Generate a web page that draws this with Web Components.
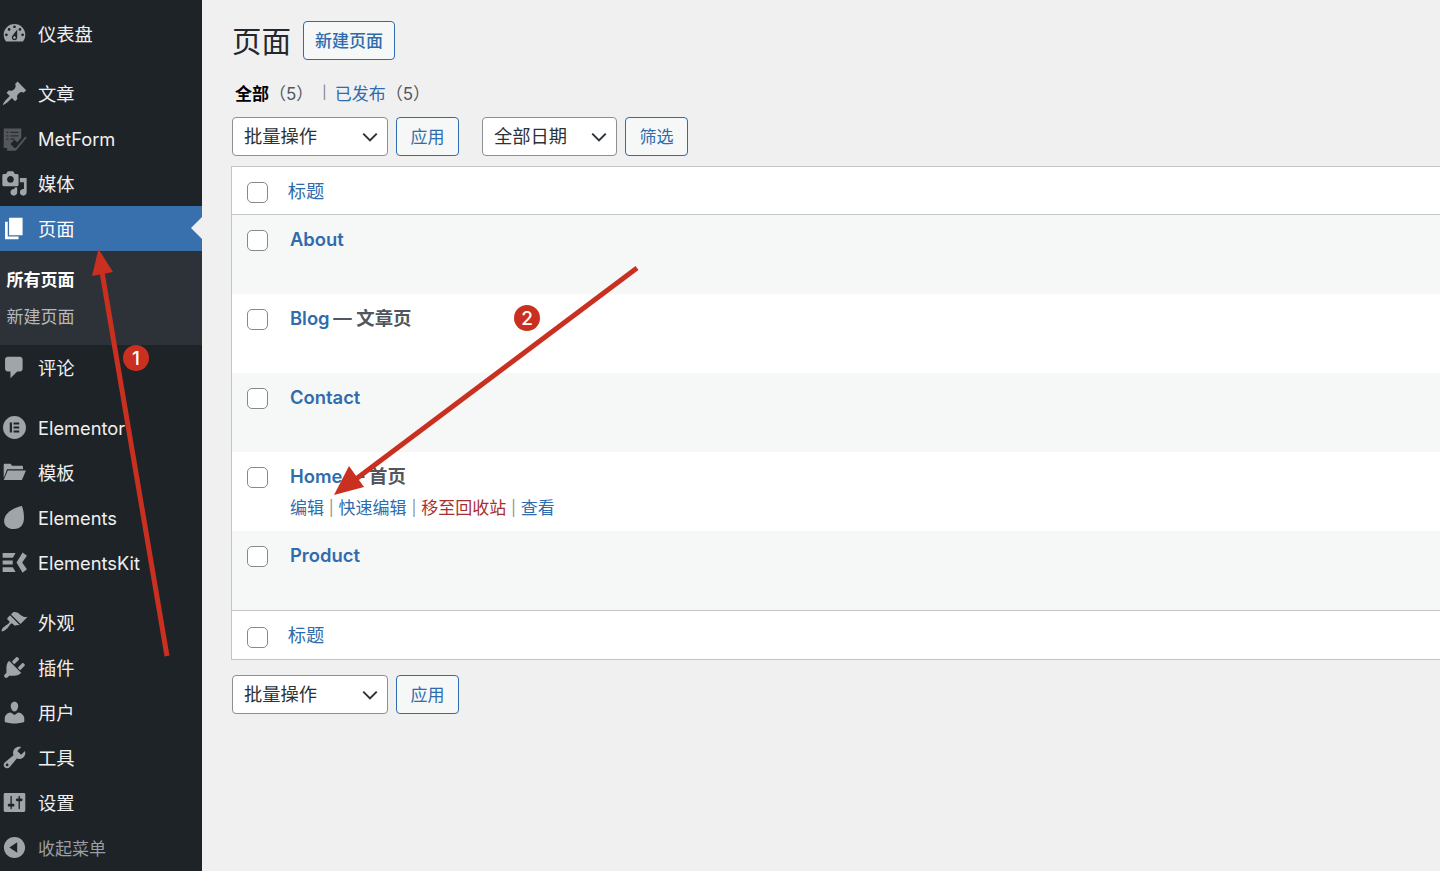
<!doctype html>
<html lang="zh-CN">
<head>
<meta charset="utf-8">
<title>页面</title>
<style>
  html, body { margin: 0; height: 871px; overflow: hidden; background: #f0f0f1; }
  body { font-family: Inter, "Noto Sans CJK SC", sans-serif; position: relative; }
  .shell { display: flex; height: 871px; }
</style>
</head>
<body>
<div class="shell">
  <wp-sidebar>
    <wp-menu-item icon="dashboard">仪表盘</wp-menu-item>
    <wp-menu-item icon="post" sep>文章</wp-menu-item>
    <wp-menu-item icon="metform" lat>MetForm</wp-menu-item>
    <wp-menu-item icon="media">媒体</wp-menu-item>
    <wp-menu-item icon="page" current>页面</wp-menu-item>
    <wp-submenu>
      <wp-submenu-link current>所有页面</wp-submenu-link>
      <wp-submenu-link>新建页面</wp-submenu-link>
    </wp-submenu>
    <wp-menu-item icon="comments">评论</wp-menu-item>
    <wp-menu-item icon="elementor" sep lat>Elementor</wp-menu-item>
    <wp-menu-item icon="folder">模板</wp-menu-item>
    <wp-menu-item icon="leaf" lat>Elements</wp-menu-item>
    <wp-menu-item icon="ekit" lat>ElementsKit</wp-menu-item>
    <wp-menu-item icon="brush" sep>外观</wp-menu-item>
    <wp-menu-item icon="plugin">插件</wp-menu-item>
    <wp-menu-item icon="users">用户</wp-menu-item>
    <wp-menu-item icon="tools">工具</wp-menu-item>
    <wp-menu-item icon="settings">设置</wp-menu-item>
    <wp-menu-item icon="collapse" muted>收起菜单</wp-menu-item>
  </wp-sidebar>

  <wp-pages-screen>
    <wp-filter-bar slot="top">
      <wp-select width="156">批量操作</wp-select>
      <wp-button>应用</wp-button>
      <wp-select width="135" class="gap">全部日期</wp-select>
      <wp-button>筛选</wp-button>
    </wp-filter-bar>
    <wp-list-table slot="table">
      <wp-table-head>标题</wp-table-head>
      <wp-page-row alt title="About"></wp-page-row>
      <wp-page-row title="Blog" state="— 文章页"></wp-page-row>
      <wp-page-row alt title="Contact"></wp-page-row>
      <wp-page-row title="Home" state="— 首页" actions></wp-page-row>
      <wp-page-row alt title="Product"></wp-page-row>
      <wp-table-head foot>标题</wp-table-head>
    </wp-list-table>
    <wp-filter-bar slot="bottom">
      <wp-select width="156">批量操作</wp-select>
      <wp-button>应用</wp-button>
    </wp-filter-bar>
  </wp-pages-screen>
</div>
<wp-annotations></wp-annotations>

<script>
// Пути иконок — в сетке 20x20, как у dashicons
const ICONS = {
  dashboard: `<path fill-rule="evenodd" d="M3.76 16h12.48c1.1-1.37 1.76-3.11 1.76-5 0-4.42-3.58-8-8-8s-8 3.58-8 8c0 1.89.66 3.63 1.76 5zM10 4c.55 0 1 .45 1 1s-.45 1-1 1-1-.45-1-1 .45-1 1-1zM6 6c.55 0 1 .45 1 1s-.45 1-1 1-1-.45-1-1 .45-1 1-1zm8 0c.55 0 1 .45 1 1s-.45 1-1 1-1-.45-1-1 .45-1 1-1zm-5.37 5.55L12 7v6c0 1.1-.9 2-2 2s-2-.9-2-2c0-.57.24-1.08.63-1.45zM4 10c.55 0 1 .45 1 1s-.45 1-1 1-1-.45-1-1 .45-1 1-1zm12 0c.55 0 1 .45 1 1s-.45 1-1 1-1-.45-1-1 .45-1 1-1zm-5 3c0-.55-.45-1-1-1s-1 .45-1 1 .45 1 1 1 1-.45 1-1z"/>`,
  post: `<path d="M10.44 3.02l1.82-1.82 6.36 6.35-1.83 1.82c-1.05-.68-2.48-.57-3.41.36l-.75.75c-.92.93-1.04 2.35-.35 3.41l-1.83 1.82-2.41-2.41-2.8 2.79c-.42.42-3.38 2.71-3.8 2.29s1.86-3.39 2.28-3.81l2.79-2.79L4.1 9.36l1.83-1.82c1.05.69 2.48.57 3.4-.36l.75-.75c.93-.92 1.05-2.35.36-3.41z"/>`,
  metform: `<path fill="#54585c" d="M2 2.500h13v7l-3 3.500-2-2-3 3 3 3H2z"/><path fill="#54585c" d="M11 17l7-8.500 1 1-8 9.500H4.500V17z"/><path stroke="#2a2e32" stroke-width="1" d="M4 5.500h1.500M7 5.500h6M4 8h1.500M7 8h6M4 10.500h1.500M7 10.500h3"/>`,
  media: `<path fill-rule="evenodd" d="M13 11V4c0-.55-.45-1-1-1h-1.670L9 1H5L3.670 3H2c-.55 0-1 .45-1 1v7c0 .55.45 1 1 1h10c.55 0 1-.45 1-1zM7 4.500c1.380 0 2.500 1.120 2.500 2.500S8.380 9.500 7 9.500 4.500 8.380 4.500 7 5.620 4.500 7 4.500zM14 6h5v10.500c0 1.380-1.120 2.500-2.500 2.500S14 17.880 14 16.500s1.120-2.500 2.500-2.500c.17 0 .34.02.5.05V9h-3V6zm-4 8.050V13h2v3.500c0 1.380-1.120 2.500-2.500 2.500S7 17.880 7 16.500 8.120 14 9.500 14c.17 0 .34.02.5.05z"/>`,
  page: `<path d="M6 15V2h10v13H6zm-1 1h8v2H3V5h2v11z"/>`,
  comments: `<path d="M5 2h9c1.100 0 2 .9 2 2v7c0 1.100-.9 2-2 2h-2l-5 5v-5H5c-1.100 0-2-.9-2-2V4c0-1.100.9-2 2-2z"/>`,
  elementor: `<path fill-rule="evenodd" d="M10 1.500a8.500 8.500 0 1 0 0 17 8.500 8.500 0 0 0 0-17zM6.500 6.300h1.600v7.400H6.500zM9.300 6.300h4.200v1.500H9.300zM9.300 9.250h4.200v1.500H9.300zM9.300 12.200h4.200v1.500H9.300z"/>`,
  folder: `<path d="M2 14V4.500c0-.6.4-1 1-1h4l1.300 1.500h7c.6 0 1 .4 1 1v1.500H4.500z"/><path d="M5 8.500h13.500L15.500 15.500H2z"/>`,
  leaf: `<path d="M15.500 1.500C10 2.500 2.300 6.500 2.300 12.500c0 3.500 2.700 6 7.200 6 5 0 7.500-3.500 7.500-8 0-3.500-.5-6.500-1.500-9z"/>`,
  ekit: `<path d="M1.200 3h9.600l-2 3.500H1.200zM1.200 8.500h7.500v3H1.200zM1.200 13.500h7.600l2 3.500H1.200z"/><path d="M16 2.500l3.200 2.500-3.500 5 3.500 5-3.200 2.500-4.500-7.500z"/>`,
  brush: `<path d="M14.480 11.060L7.410 3.990l1.500-1.500c.5-.56 2.300-.47 3.510.32 1.210.8 1.430 1.280 2.910 2.100 1.180.64 2.450 1.260 4.450.85zm-.71.71L6.700 4.700 4.930 6.470c-.39.39-.39 1.020 0 1.410l1.060 1.060c.39.39.39 1.030 0 1.420-.6.6-1.430 1.110-2.210 1.690-.35.26-.7.53-1.010.84C1.430 13.230.1 15.710.5 16.500c.39.39 2.860-.93 4.200-2.270.31-.31.58-.66.84-1.010.58-.78 1.090-1.610 1.690-2.210.39-.39 1.020-.39 1.410 0l1.060 1.060c.39.39 1.020.39 1.410 0z"/>`,
  plugin: `<path d="M13.110 4.360L9.870 7.600 8 5.730l3.240-3.240c.35-.34 1.050-.2 1.560.32.52.51.66 1.210.31 1.550zm-8 1.770l.91-1.120 9.010 9.010-1.190.84c-.71.71-2.630 1.160-3.820 1.160H6.140L4.900 17.260c-.59.59-1.540.59-2.120 0-.59-.58-.59-1.530 0-2.120l1.240-1.240v-3.880c0-1.130.4-3.190 1.090-3.890zm7.260 3.970l3.240-3.240c.34-.35 1.040-.21 1.550.31.52.51.66 1.210.31 1.550l-3.240 3.250z"/>`,
  users: `<path d="M10 9.250c-2.270 0-2.730-3.440-2.730-3.440C7 4.020 7.820 2 9.970 2c2.160 0 2.980 2.020 2.710 3.810 0 0-.41 3.440-2.680 3.440zm0 2.570L12.720 10c2.390 0 4.520 2.330 4.520 4.530v2.490s-3.650 1.130-7.240 1.130c-3.650 0-7.240-1.130-7.240-1.130v-2.490c0-2.250 1.940-4.480 4.470-4.480z"/>`,
  tools: `<path fill-rule="evenodd" d="M16.680 9.770c-1.340 1.340-3.300 1.670-4.950.99l-5.410 6.520c-.99.99-2.590.99-3.580 0s-.99-2.590 0-3.570l6.520-5.420c-.68-1.650-.35-3.610.99-4.950 1.280-1.280 3.120-1.620 4.720-1.060l-2.890 2.890 2.820 2.820 2.860-2.870c.53 1.580.18 3.390-1.080 4.650zM3.810 16.210c.4.39 1.040.39 1.430 0 .4-.4.4-1.040 0-1.430-.39-.4-1.030-.4-1.430 0-.39.39-.39 1.030 0 1.430z"/>`,
  settings: `<path fill-rule="evenodd" d="M18 16V4c0-.55-.45-1-1-1H3c-.55 0-1 .45-1 1v12c0 .55.45 1 1 1h14c.55 0 1-.45 1-1zM8 11h1c.55 0 1 .45 1 1s-.45 1-1 1H8v1.500c0 .28-.22.5-.5.5s-.5-.22-.5-.5V13H6c-.55 0-1-.45-1-1s.45-1 1-1h1V5.500c0-.28.22-.5.5-.5s.5.22.5.5V11zm5-2h-1c-.55 0-1-.45-1-1s.45-1 1-1h1V5.500c0-.28.22-.5.5-.5s.5.22.5.5V7h1c.55 0 1 .45 1 1s-.45 1-1 1h-1v5.500c0 .28-.22.5-.5.5s-.5-.22-.5-.5V9z"/>`,
  collapse: `<path fill-rule="evenodd" d="M10 2.160c4.330 0 7.840 3.510 7.840 7.840s-3.510 7.840-7.840 7.840S2.160 14.330 2.160 10 5.710 2.160 10 2.160zm2 11.720V6.120L6.180 9.970z"/>`,
};

const BLUE = '#2f6cad';

function shadow(el, html) {
  el.attachShadow({ mode: 'open' }).innerHTML = html;
  return el.shadowRoot;
}

class WpSidebar extends HTMLElement {
  constructor() {
    super();
    shadow(this, `<style>
      :host { display: block; flex: none; width: 202px; height: 871px; box-sizing: border-box;
        padding-top: 10.5px; background: #1e2328; overflow: hidden; }
    </style><slot></slot>`);
  }
}

class WpMenuItem extends HTMLElement {
  connectedCallback() {
    if (this.shadowRoot) return;
    shadow(this, `<style>
      :host { display: flex; align-items: center; height: 45px; position: relative;
        color: #f0f0f1; font-size: 18.300px; }
      :host([sep]) { margin-top: 15px; }
      :host([muted]) { color: #9a9ea3; font-size: 17px; }
      :host([current]) { background: #386fad; color: #fff; }
      :host([current]) svg { fill: #fff; }
      :host([current])::after { content: ""; position: absolute; right: 0; top: 50%; margin-top: -11px;
        border: 11px solid transparent; border-right-color: #f0f0f1; border-left-width: 0; }
      svg { width: 27px; height: 27px; margin: 0 10px 0 1px; fill: #a0a5aa; flex: none; }
      span { position: relative; top: -0.5px; }
      :host([lat]) span, :host([muted]) span { top: 0.5px; }
    </style>
    <svg viewBox="0 0 20 20">${ICONS[this.getAttribute('icon')] || ''}</svg><span><slot></slot></span>`);
  }
}

class WpSubmenu extends HTMLElement {
  constructor() {
    super();
    shadow(this, `<style>
      :host { display: block; height: 94px; box-sizing: border-box; padding-top: 9.500px; background: #2d3238; }
    </style><slot></slot>`);
  }
}

class WpSubmenuLink extends HTMLElement {
  constructor() {
    super();
    shadow(this, `<style>
      :host { display: flex; align-items: center; height: 37px; padding-left: 6.500px;
        font-size: 17px; color: #b6b9bc; }
      :host([current]) { color: #fff; font-weight: 600; }
    </style><slot></slot>`);
  }
}

class WpPagesScreen extends HTMLElement {
  constructor() {
    super();
    shadow(this, `<style>
      :host { display: block; flex: 1; min-width: 0; overflow: hidden; padding: 21px 0 0 30px; color: #1d2327; }
      header { display: flex; align-items: center; gap: 12px; height: 39px; }
      h1 { margin: 0 0 4px; font-size: 29.500px; font-weight: 400; color: #23282d; }
      .new { display: flex; align-items: center; height: 39px; box-sizing: border-box; padding: 0 11px 2px;
        border: 1.300px solid ${BLUE}; border-radius: 4px; background: #f6f7f7; color: ${BLUE};
        font-size: 17px; font-weight: 500; }
      .views { display: flex; align-items: center; height: 24px; margin: 20px 0 13px 3px;
        font-size: 17px; color: #50575e; white-space: nowrap; }
      .views b { color: #000; font-weight: 600; }
      .views a { color: ${BLUE}; }
      .views i { font-style: normal; margin: 0 8px 0 9px; color: #787c82; font-size: 13px; }
      .tbl { display: block; margin: 10px -12px 15px -1px; }
    </style>
    <header><h1>页面</h1><span class="new">新建页面</span></header>
    <div class="views"><b>全部</b><span>（5）</span><i>|</i><a>已发布</a><span>（5）</span></div>
    <slot name="top"></slot>
    <div class="tbl"><slot name="table"></slot></div>
    <slot name="bottom"></slot>`);
  }
}

class WpFilterBar extends HTMLElement {
  constructor() {
    super();
    shadow(this, `<style>
      :host { display: flex; gap: 8px; height: 39px; }
      ::slotted(.gap) { margin-left: 15px; }
    </style><slot></slot>`);
  }
}

class WpSelect extends HTMLElement {
  connectedCallback() {
    if (this.shadowRoot) return;
    shadow(this, `<style>
      :host { display: flex; align-items: center; justify-content: space-between; box-sizing: border-box;
        width: ${this.getAttribute('width')}px; height: 39px; padding: 0 8.500px 0 11px; background: #fff;
        border: 1.300px solid #8c8f94; border-radius: 4px; font-size: 18.300px; color: #2c3338; }
      span { position: relative; top: -1.500px; }
      svg { width: 18px; height: 18px; fill: none; stroke: #2c3338; stroke-width: 1.800; }
    </style><span><slot></slot></span><svg viewBox="0 0 16 16"><path d="M2 5l6 6 6-6"/></svg>`);
  }
}

class WpButton extends HTMLElement {
  constructor() {
    super();
    shadow(this, `<style>
      :host { display: flex; align-items: center; justify-content: center; box-sizing: border-box;
        width: 63px; height: 39px; padding-bottom: 2px; border: 1.300px solid ${BLUE}; border-radius: 4px;
        background: #f6f7f7; color: ${BLUE}; font-size: 17px; }
    </style><slot></slot>`);
  }
}

const CHECK = `display: block; flex: none; width: 21px; height: 21px; box-sizing: border-box;
  background: #fff; border: 1.600px solid #85888c; border-radius: 5px;`;

class WpListTable extends HTMLElement {
  constructor() {
    super();
    shadow(this, `<style>
      :host { display: block; background: #fff; border: 1px solid #c3c4c7; border-right: 0; }
    </style><slot></slot>`);
  }
}

class WpTableHead extends HTMLElement {
  constructor() {
    super();
    shadow(this, `<style>
      :host { display: flex; align-items: center; height: 48px; box-sizing: border-box; padding-left: 14.700px;
        gap: 20px; border-bottom: 1px solid #c3c4c7; color: ${BLUE}; font-size: 18.300px; }
      :host([foot]) { height: 49px; border-bottom: 0; border-top: 1px solid #c3c4c7; }
      .cb { ${CHECK} position: relative; top: 2px; }
      span { position: relative; top: -1px; }
    </style><div class="cb"></div><span><slot></slot></span>`);
  }
}

class WpPageRow extends HTMLElement {
  connectedCallback() {
    if (this.shadowRoot) return;
    const state = this.getAttribute('state');
    const actions = this.hasAttribute('actions') ? `
      <div class="actions"><a>编辑</a><i>|</i><a>快速编辑</a><i>|</i><a class="del">移至回收站</a><i>|</i><a>查看</a></div>` : '';
    shadow(this, `<style>
      :host { display: flex; height: 79px; box-sizing: border-box; padding: 12px 0 0 14.700px; background: #fff; }
      :host([alt]) { background: #f6f7f7; }
      .cb { ${CHECK} margin: 3px 22.300px 0 0; }
      .title { height: 24px; line-height: 24px; font-size: 18.400px; font-weight: 600; color: ${BLUE}; white-space: nowrap; }
      .title span { color: #50575e; margin-left: -1px; }
      .actions { display: flex; gap: 4.800px; margin-top: 8px; height: 24px; line-height: 24px; font-size: 17px; color: ${BLUE}; white-space: nowrap; }
      .actions i { font-style: normal; color: #8c8f94; font-size: 15px; }
      .del { color: #a82f30; }
    </style>
    <div class="cb"></div>
    <div><div class="title">${this.getAttribute('title')}${state ? ` <span>${state}</span>` : ''}</div>${actions}</div>`);
  }
}

// Красные стрелки и номера поверх скриншота
class WpAnnotations extends HTMLElement {
  constructor() {
    super();
    shadow(this, `<style>
      :host { position: absolute; inset: 0; pointer-events: none; display: block; }
      svg { position: absolute; inset: 0; width: 1440px; height: 871px; }
      .n { position: absolute; width: 26px; height: 26px; border-radius: 50%; background: #c9301f; color: #fff;
        display: grid; place-items: center; font-size: 19px; font-weight: 500; }
    </style>
    <svg viewBox="0 0 1440 871">
      <path d="M167 656L102 272" stroke="#c9301f" stroke-width="5" fill="none"/>
      <path d="M98.500 249L113 272L92 276z" fill="#c9301f"/>
      <path d="M637 268L352 482" stroke="#c9301f" stroke-width="5" fill="none"/>
      <path d="M334 495L349 466L364 487z" fill="#c9301f"/>
    </svg>
    <div class="n" style="left:123px;top:345px">1</div>
    <div class="n" style="left:514px;top:305px">2</div>`);
  }
}

customElements.define('wp-sidebar', WpSidebar);
customElements.define('wp-menu-item', WpMenuItem);
customElements.define('wp-submenu', WpSubmenu);
customElements.define('wp-submenu-link', WpSubmenuLink);
customElements.define('wp-pages-screen', WpPagesScreen);
customElements.define('wp-filter-bar', WpFilterBar);
customElements.define('wp-select', WpSelect);
customElements.define('wp-button', WpButton);
customElements.define('wp-list-table', WpListTable);
customElements.define('wp-table-head', WpTableHead);
customElements.define('wp-page-row', WpPageRow);
customElements.define('wp-annotations', WpAnnotations);
</script>
</body>
</html>
